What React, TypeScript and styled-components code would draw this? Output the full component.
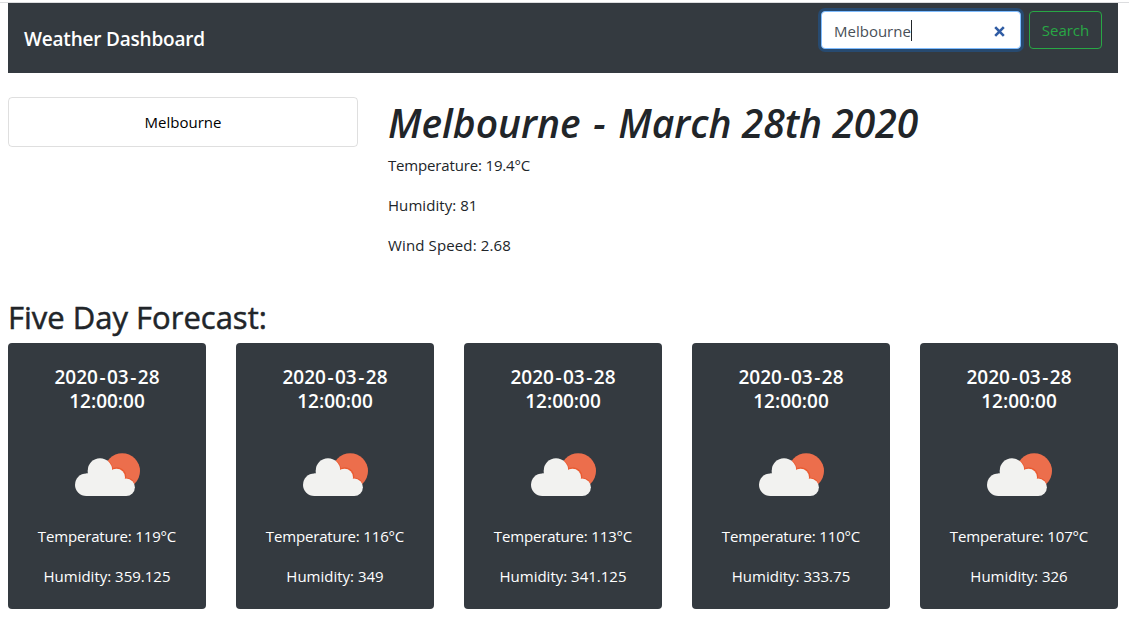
import React from "react";
import styled, { createGlobalStyle } from "styled-components";

const GlobalStyle = createGlobalStyle`
  *, *::before, *::after { box-sizing: border-box; }
  body {
    margin: 0;
    background: #fff;
    color: #212529;
    font-family: "Segoe UI", "Open Sans", "Noto Sans", sans-serif;
    font-size: 15px;
    line-height: 24px;
    overflow: hidden;
  }
  h1, h2, h5, p { margin: 0; }
`;

const Page = styled.div`
  border-top: 1px solid #dcdddf;
  margin-top: 2px;
  padding: 0 11px 0 8px;
`;

const Navbar = styled.nav`
  display: flex;
  align-items: flex-start;
  justify-content: space-between;
  height: 70px;
  padding: 8px 16px;
  background: #343a40;
`;

const Brand = styled.span`
  color: #fff;
  font-size: 19px;
  font-weight: 600;
  line-height: 56px;
  letter-spacing: -0.2px;
  white-space: nowrap;
`;

const SearchForm = styled.div`
  display: flex;
  gap: 8px;
`;

const SearchBox = styled.div`
  display: flex;
  align-items: center;
  width: 200px;
  height: 38px;
  padding: 2px 15px 0 12px;
  border: 1px solid #80bdff;
  border-radius: 4px;
  background: #fff;
  color: #495057;
  box-shadow: 0 0 0 3px rgba(0, 123, 255, 0.25);
`;

const Caret = styled.span`
  width: 1px;
  height: 21px;
  margin: -2px auto 0 0;
  background: #212529;
`;

const ClearIcon = styled.svg`
  display: block;
  width: 11px;
  height: 11px;
`;

const SearchButton = styled.button`
  width: 73px;
  height: 38px;
  padding: 0;
  border: 1px solid #28a745;
  border-radius: 4px;
  background: transparent;
  color: #28a745;
  font: inherit;
`;

const Overview = styled.section`
  display: flex;
  gap: 30px;
  padding-top: 24px;
  height: 224.6px;
`;

const CityItem = styled.div`
  width: 350px;
  height: 50px;
  border: 1px solid rgba(0, 0, 0, 0.125);
  border-radius: 4px;
  color: #000;
  line-height: 49px;
  text-align: center;
`;

const CityTitle = styled.h1`
  margin: 2px 0 6px;
  font-size: 39px;
  font-style: italic;
  font-weight: 600;
  line-height: 48px;
  white-space: nowrap;
`;

const Hyphen = styled.span<{ $space: number }>`
  margin: 0 ${({ $space }) => $space}px;
`;

const Stat = styled.p<{ $spacing?: number }>`
  margin-bottom: 16px;
  letter-spacing: ${({ $spacing = 0 }) => $spacing}px;
  white-space: nowrap;
`;

const ForecastTitle = styled.h2`
  margin-bottom: 7px;
  font-size: 31px;
  font-weight: 500;
  line-height: 38.4px;
  -webkit-text-stroke: 0.5px #212529;
`;

const Cards = styled.div`
  display: grid;
  grid-template-columns: repeat(5, 198px);
  gap: 30px;
`;

const Card = styled.article`
  display: flex;
  flex-direction: column;
  align-items: center;
  height: 266px;
  padding: 22px 20px 20px;
  border-radius: 4px;
  background: #343a40;
  color: #fff;
  text-align: center;
`;

const CardTitle = styled.h5`
  width: 130px;
  margin-bottom: 12px;
  font-size: 19px;
  font-weight: 600;
  line-height: 24px;
`;

const DateLine = styled.span`
  display: block;
  white-space: nowrap;
`;

const WeatherIcon = styled.svg`
  display: block;
  flex: none;
  width: 100px;
  height: 100px;
  margin-bottom: -1px;
`;

const forecast = [
  { temperature: "119", humidity: "359.125" },
  { temperature: "116", humidity: "349" },
  { temperature: "113", humidity: "341.125" },
  { temperature: "110", humidity: "333.75" },
  { temperature: "107", humidity: "326" },
];

function PartlyCloudy() {
  return (
    <WeatherIcon viewBox="0 0 100 100">
      <circle cx="65.2" cy="46" r="17.8" fill="#ec6e4c" />
      <g fill="none" stroke="#ea5a30" strokeWidth="1.6">
        <path d="M50.6 35.8A12.2 12.2 0 0 1 55.2 44.4" />
        <path d="M55.4 44.4A8.5 8.5 0 0 1 68.2 53.4" />
        <path d="M68.2 53.6A8.8 8.8 0 0 1 76.4 57.4" />
      </g>
      <g fill="#f2f2f0">
        <circle cx="43" cy="45.5" r="12.2" />
        <circle cx="29.3" cy="59.7" r="11.3" />
        <circle cx="59.5" cy="52.2" r="8.5" />
        <circle cx="69.2" cy="62.3" r="8.7" />
        <path d="M30.8 45.5H55L67.5 53.6L69.2 71H29.3V48.4H30.8Z" />
      </g>
    </WeatherIcon>
  );
}

export default function App() {
  return (
    <>
      <GlobalStyle />
      <Page>
        <Navbar>
          <Brand>Weather Dashboard</Brand>
          <SearchForm>
            <SearchBox>
              <span>Melbourne</span>
              <Caret />
              <ClearIcon viewBox="0 0 11 11">
                <path d="M1.2 1.2L9.8 9.8M9.8 1.2L1.2 9.8" stroke="#305ca4" strokeWidth="2.6" />
              </ClearIcon>
            </SearchBox>
            <SearchButton>Search</SearchButton>
          </SearchForm>
        </Navbar>
        <Overview>
          <CityItem>Melbourne</CityItem>
          <div>
            <CityTitle>
              Melbourne <Hyphen $space={2.5}>-</Hyphen> March 28th 2020
            </CityTitle>
            <Stat $spacing={-0.16}>Temperature: 19.4°C</Stat>
            <Stat $spacing={0.06}>Humidity: 81</Stat>
            <Stat $spacing={0.13}>Wind Speed: 2.68</Stat>
          </div>
        </Overview>
        <ForecastTitle>Five Day Forecast:</ForecastTitle>
        <Cards>
          {forecast.map((day) => (
            <Card key={day.temperature}>
              <CardTitle>
                <DateLine>
                  2020<Hyphen $space={1.5}>-</Hyphen>03<Hyphen $space={1.5}>-</Hyphen>28
                </DateLine>
                <DateLine>12:00:00</DateLine>
              </CardTitle>
              <PartlyCloudy />
              <Stat $spacing={-0.16}>Temperature: {day.temperature}°C</Stat>
              <Stat>Humidity: {day.humidity}</Stat>
            </Card>
          ))}
        </Cards>
      </Page>
    </>
  );
}
